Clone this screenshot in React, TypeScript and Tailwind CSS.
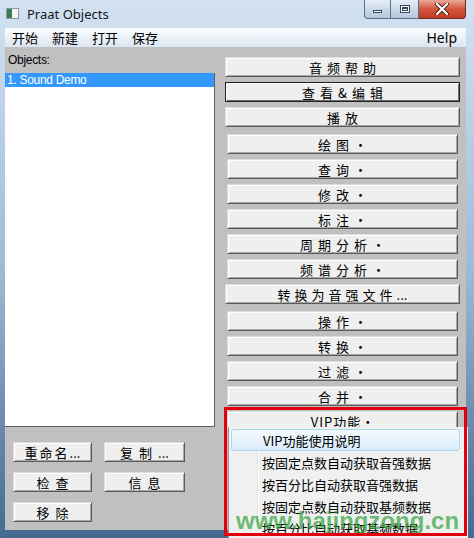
import clsx from 'clsx';

type Item = { label: string; suffix?: string; sub?: boolean; primary?: boolean; group?: boolean };

const actions: Item[] = [
  { label: '音频帮助' },
  { label: '查看&编辑', primary: true },
  { label: '播放' },
  { label: '绘图', suffix: '·', sub: true, group: true },
  { label: '查询', suffix: '·', sub: true },
  { label: '修改', suffix: '·', sub: true },
  { label: '标注', suffix: '·', sub: true },
  { label: '周期分析', suffix: '·', sub: true },
  { label: '频谱分析', suffix: '·', sub: true },
  { label: '转换为音强文件', suffix: '...' },
  { label: '操作', suffix: '·', sub: true, group: true },
  { label: '转换', suffix: '·', sub: true },
  { label: '过滤', suffix: '·', sub: true },
  { label: '合并', suffix: '·', sub: true },
  { label: 'VIP功能', suffix: '·', sub: true },
];

const vipItems = [
  'VIP功能使用说明',
  '按固定点数自动获取音强数据',
  '按百分比自动获取音强数据',
  '按固定点数自动获取基频数据',
  '按百分比自动获取基频数据',
];

function PraatButton({
  label,
  suffix,
  sub,
  primary,
  className,
  textClass = 'tracking-[5px]',
}: Item & { className?: string; textClass?: string }) {
  return (
    <div
      className={clsx(
        "h-[20px] flex items-center justify-center whitespace-nowrap bg-[#efefef] border text-[13px] leading-none text-black font-['Noto_Sans_CJK_SC',sans-serif]",
        sub && 'mx-[2px]',
        primary
          ? 'border-[#202020] shadow-[inset_1px_1px_0_#ffffff,inset_-1px_-1px_0_#6b6b6b]'
          : 'border-t-[#dcdcdc] border-l-[#dcdcdc] border-r-[#5a5a5a] border-b-[#5a5a5a] shadow-[inset_1px_1px_0_#ffffff,inset_-1px_-1px_0_#a8a8a8]',
        className
      )}
    >
      <span className={textClass}>{label}</span>
      {suffix && <span>{suffix}</span>}
    </div>
  );
}

export default function App() {
  return (
    <div className="relative w-[474px] h-[538px] overflow-hidden flex flex-col bg-gradient-to-b from-[#d3e2f1] via-[#9fbad6] to-[#456a91]">
      {/* Title bar */}
      <div className="h-[28px] flex items-start shrink-0">
        <div className="mt-[8px] ml-[6px] w-[13px] h-[11px] flex border border-[#8a9aa8] bg-white">
          <div className="w-[5px] h-full bg-[#3f7a55]" />
          <div className="flex-1 bg-[#f4f6f4]" />
        </div>
        <div className="ml-[8px] mt-[5px] text-[13px] text-[#151515] font-['Noto_Sans',sans-serif]">Praat Objects</div>
        <div className="flex-1" />
        {/* Window controls */}
        <div className="flex mr-[8px]">
          <div className="w-[27px] h-[19px] rounded-bl-[4px] border border-[#5b6f86] border-t-0 bg-gradient-to-b from-[#e6eef7] to-[#b3c7dc] flex items-center justify-center">
            <div className="w-[9px] h-[3px] mt-[5px] bg-white border border-[#33475e]" />
          </div>
          <div className="w-[28px] h-[19px] border-y border-r border-[#5b6f86] border-t-0 bg-gradient-to-b from-[#e6eef7] to-[#b3c7dc] flex items-center justify-center">
            <div className="w-[10px] h-[8px] border border-[#33475e] bg-white flex items-center justify-center">
              <div className="w-[6px] h-[4px] border border-[#33475e] border-t-2" />
            </div>
          </div>
          <div className="w-[47px] h-[19px] rounded-br-[4px] border-y border-r border-[#6e2a20] border-t-0 bg-gradient-to-b from-[#eaa898] via-[#d2553d] to-[#c33a22] flex items-center justify-center">
            <svg width="14" height="12" viewBox="0 0 14 12">
              <path d="M2 1 L12 11 M12 1 L2 11" stroke="#4a1c14" strokeWidth="4" strokeLinecap="round" />
              <path d="M2 1 L12 11 M12 1 L2 11" stroke="#ffffff" strokeWidth="2.2" strokeLinecap="round" />
            </svg>
          </div>
        </div>
      </div>

      {/* Client area */}
      <div className="ml-[5px] mr-[8px] flex flex-col h-[502px] shrink-0">
        {/* Menu bar */}
        <div className="h-[19px] flex items-center bg-gradient-to-b from-[#fbfcfe] to-[#dce6f1] text-[13px] text-black font-['Noto_Sans_CJK_SC',sans-serif] leading-none">
          <div className="flex gap-[14px] pl-[7px]">
            <span>开始</span>
            <span>新建</span>
            <span>打开</span>
            <span>保存</span>
          </div>
          <div className="flex-1" />
          <span className="pr-[9px] font-['Noto_Sans',sans-serif] text-[14px]">Help</span>
        </div>

        {/* Main */}
        <div className="flex-1 bg-[#c0c0c0] flex">
          {/* Left column */}
          <div className="w-[210px] flex flex-col">
            <div className="h-[26px] pt-[7px] pl-[3px] text-[12px] leading-none text-black font-['Liberation_Sans',sans-serif] tracking-[-0.3px]">
              Objects:
            </div>
            <div className="h-[354px] bg-white border-r border-b border-[#5e5e5e]">
              <div className="h-[14px] bg-[#3399ff] text-white text-[12px] leading-[14px] pl-[2px] font-['Liberation_Sans',sans-serif] tracking-[-0.3px]">
                1. Sound Demo
              </div>
            </div>
            <div className="mt-[15px] pl-[8px] flex flex-col gap-[10px]">
              <div className="flex gap-[12px]">
                <PraatButton label="重命名" suffix="..." className="w-[79px] h-[19px]" textClass="tracking-[2px]" />
                <PraatButton label="复制" suffix="..." className="w-[81px] h-[19px]" textClass="tracking-[6px]" />
              </div>
              <div className="flex gap-[12px]">
                <PraatButton label="检查" className="w-[79px] h-[19px] pl-[6px]" textClass="tracking-[6px]" />
                <PraatButton label="信息" className="w-[81px] h-[19px] pl-[6px]" textClass="tracking-[6px]" />
              </div>
              <div className="flex">
                <PraatButton label="移除" className="w-[79px] h-[19px] pl-[6px]" textClass="tracking-[6px]" />
              </div>
            </div>
          </div>

          {/* Right column */}
          <div className="ml-[10px] w-[235px] pt-[10px] flex flex-col">
            {actions.map((a, i) => (
              <PraatButton
                key={a.label}
                {...a}
                textClass={a.label === '转换为音强文件' ? 'tracking-[4px]' : a.label === 'VIP功能' ? 'tracking-[1px]' : 'tracking-[5px]'}
                className={clsx(i === 0 ? '' : a.group ? 'mt-[7px]' : 'mt-[5px]', !a.suffix && 'pl-[5px]')}
              />
            ))}
          </div>
        </div>
      </div>

      {/* VIP dropdown menu */}
      <div className="absolute left-[228px] top-[427px] w-[240px] h-[112px] bg-[#f0f0f0] border-l border-[#979797] pt-[2px] font-['Noto_Sans_CJK_SC',sans-serif] text-[13px] text-black">
        <div className="absolute left-[28px] top-0 bottom-0 w-[1px] bg-[#e2e3e3]" />
        <div className="absolute left-[29px] top-0 bottom-0 w-[1px] bg-white" />
        {vipItems.map((t, i) => (
          <div
            key={t}
            className={clsx(
              'relative h-[22px] flex items-center pl-[31px] ml-[2px] mr-[8px] leading-none',
              i === 0 && 'rounded-[3px] border border-[#a8d8eb] bg-gradient-to-b from-[#f3f9fd] to-[#dcecfb]'
            )}
          >
            {t}
          </div>
        ))}
      </div>

      {/* Watermark */}
      <div className="absolute left-[236px] top-[509px] text-[24px] font-bold leading-none text-[#2fa23a]/70 font-['Liberation_Sans',sans-serif] pointer-events-none">
        www.hajingzong.cn
      </div>

      {/* Red annotation box */}
      <div className="absolute left-[224px] top-[407px] w-[243px] h-[129px] border-[3px] border-[#e3000e] pointer-events-none" />
    </div>
  );
}
